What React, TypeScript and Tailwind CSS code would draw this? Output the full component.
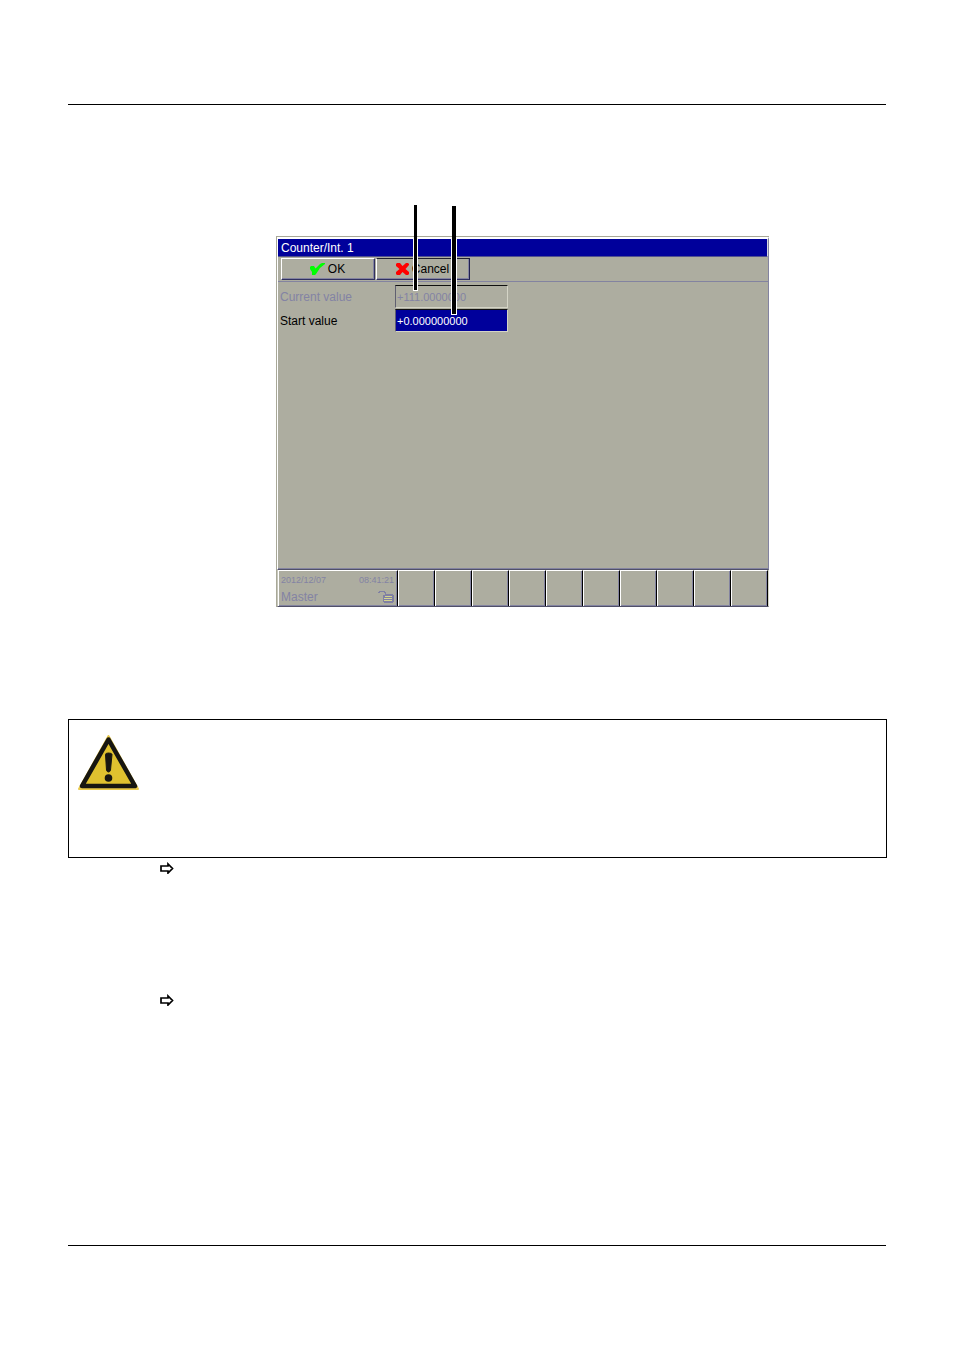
import React from "react";

const softKeys = [1, 2, 3, 4, 5, 6, 7, 8, 9, 10];

function CheckIcon() {
  return (
    <svg width="15" height="12" viewBox="0 0 15 12" aria-hidden="true">
      <path d="M0 4 L1 3 H4 L5.5 5.5 L10 1 L12 0 H15 V1 L10 5 L6 11 L5 12 H2 V9 L0 6Z" fill="#00ff00" />
    </svg>
  );
}

function CrossIcon() {
  return (
    <svg width="13" height="12" viewBox="0 0 13 12" aria-hidden="true">
      <path d="M0 1 L1 0 H4 L6.5 3 L10 0 H12 L13 1 V2 L9.5 6 L13 9 V11 L12 12 H10 L6.5 9 L4 12 H1 L0 11 V9 L3.5 6 L0 3Z" fill="#ff0000" />
    </svg>
  );
}

function LockIcon() {
  return (
    <svg width="16" height="12" viewBox="0 0 16 12" shapeRendering="crispEdges" aria-hidden="true">
      <path d="M0 1h1V0h6v1h1v2h7v1h1v7h-1v1H6v-1H5V4h2V2H6V1H2v1H0z" fill="#8080a4" />
      <path d="M7 5h7v1H7zM6 7h8v1H6zM6 9h8v1H6z" fill="#d4d490" />
    </svg>
  );
}

function WarningIcon() {
  return (
    <svg width="61" height="56" viewBox="0 0 61 56" role="img" aria-label="Warning">
      <path d="M30.5 1 L60 54 H1Z" fill="#e2c432" stroke="#e9c94a" strokeWidth="2" strokeLinejoin="round" />
      <path d="M30.5 4.5 L57 51 H4Z" fill="#dfc12f" stroke="#171611" strokeWidth="4.5" strokeLinejoin="round" />
      <path d="M27.5 19.5 Q27.5 18 30.5 18 Q34 18 34 19.5 L32.5 35 Q32 37 30.5 37 Q29 37 28.5 35Z" fill="#171611" stroke="#171611" strokeLinejoin="round" />
      <circle cx="30.5" cy="43" r="3.8" fill="#171611" />
    </svg>
  );
}

function StepArrow() {
  return (
    <svg width="14" height="12" viewBox="0 0 14 12" aria-hidden="true">
      <path d="M1 4 H8 V2 L12.5 6.5 L8 11 V9 H1Z" fill="white" stroke="black" strokeWidth="1.7" />
    </svg>
  );
}

export default function App() {
  return (
    <main className="min-h-screen bg-white px-[68px] pt-[104px] pb-[104px] font-['Liberation_Sans',sans-serif] text-xs text-black">
      <hr className="border-t border-black" />

      <section className="relative mt-[131px] ml-[208px] max-w-[493px] border-t border-l border-[#a8a898] bg-[#adada0]">
        <div className="flex min-h-[333px] flex-col border-t-2 border-r border-b border-l border-t-white border-r-[#8383a0] border-b-[#505068] border-l-white">
          <div className="flex grow flex-col border-b border-[#8383a0]">
            <h1 className="flex h-[18px] items-center border-r border-b border-r-[#d8d8e0] border-b-[#505090] bg-[#00009b] px-[3px] text-white">
              Counter/Int. 1
            </h1>
            <div className="flex h-[25px] items-start gap-px border-b border-[#8383a0] px-[3px] pt-px">
              <button type="button" className="h-[22px] w-[94px] border border-t-white border-r-[#303060] border-b-[#303060] border-l-white">
                <span className="flex h-full items-center justify-center gap-[3px] border-r border-b border-[#8383a0]">
                  <CheckIcon />
                  OK
                </span>
              </button>
              <button type="button" className="h-[22px] w-[94px] border border-t-[#202030] border-r-[#202050] border-b-[#303060] border-l-white">
                <span className="flex h-full items-center justify-center gap-[3px] border-r border-b border-[#8383a0]">
                  <CrossIcon />
                  Cancel
                </span>
              </button>
            </div>
            <form className="grid grid-cols-[115px_113px] items-center gap-y-px px-[2px] pt-[3px]">
              <label htmlFor="current" className="text-[#8383a4]">Current value</label>
              <input
                id="current"
                defaultValue="+111.0000000"
                disabled
                className="h-[23px] w-full border border-t-[#101010] border-r-[#d4d4c6] border-b-[#d4d4c6] border-l-[#606070] bg-[#adada0] px-px text-[11px] text-[#8383a4]"
              />
              <label htmlFor="start">Start value</label>
              <input
                id="start"
                defaultValue="+0.000000000"
                className="h-[23px] w-full border border-t-[#101010] border-r-[#d4d4c6] border-b-[#d4d4c6] border-l-[#606070] bg-[#00009b] px-px text-[11px] text-white outline-none"
              />
            </form>
          </div>
        </div>

        <footer className="flex h-[37px] border-r border-b border-l border-r-[#d4d4c6] border-b-[#505068] border-l-[#c8c8bc]">
          <div className="flex w-[120px] flex-col border-t border-r border-l border-t-white border-r-black border-l-white text-[#8383a4]">
            <div className="flex h-full flex-col justify-between border-r border-b border-[#8383a0] px-[2px] pt-[3px]">
              <div className="flex justify-between text-[9px] leading-[12px]">
                <time>2012/12/07</time>
                <time>08:41:21</time>
              </div>
              <div className="flex items-center justify-between leading-4">
                <span>Master</span>
                <LockIcon />
              </div>
            </div>
          </div>
          {softKeys.map((key) => (
            <button
              key={key}
              type="button"
              aria-label={`Function key ${key}`}
              className="flex-1 border-t border-r border-l border-t-white border-r-black border-l-white"
            >
              <span className="block h-full border-r border-b border-[#8383a0]" />
            </button>
          ))}
        </footer>

        <svg
          className="pointer-events-none absolute -top-8 left-[135px]"
          width="50"
          height="112"
          viewBox="0 0 50 112"
          shapeRendering="crispEdges"
          aria-hidden="true"
        >
          <path d="M1 32H6V86H1ZM39 32H45V110H39Z" fill="white" />
          <path d="M2 0H5V85H2ZM40 1H44V109H40Z" fill="black" />
        </svg>
      </section>

      <section className="mt-28 -mr-px min-h-[139px] border border-black px-[9px] py-[15px]">
        <WarningIcon />
      </section>

      <ul className="flex min-h-[387px] flex-col gap-[120px] pt-1 pl-[92px]">
        <li><StepArrow /></li>
        <li><StepArrow /></li>
      </ul>

      <hr className="border-t border-black" />
    </main>
  );
}
